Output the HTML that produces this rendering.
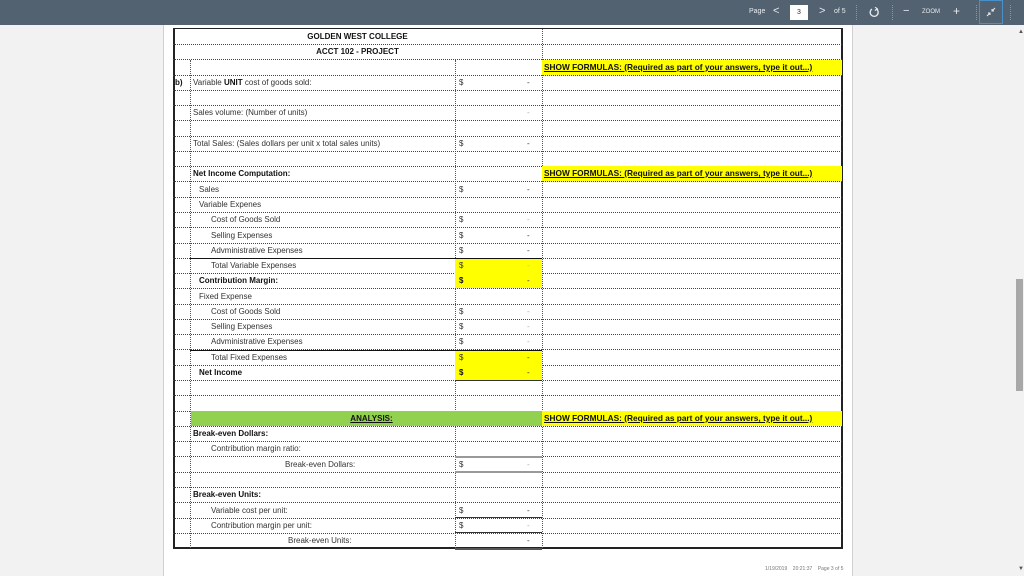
<!DOCTYPE html>
<html><head><meta charset="utf-8">
<style>
*{margin:0;padding:0;box-sizing:border-box}
body{width:1024px;height:576px;overflow:hidden;background:#f2f2f2;font-family:"Liberation Sans",sans-serif;position:relative}
#bar{position:absolute;left:0;top:0;width:1024px;height:25px;background:#536271;color:#e8ecef;font-size:7px}
#bar span{position:absolute;top:8px}
.sep{position:absolute;top:5px;height:15px;border-left:1px dotted #8a97a3}
#page{position:absolute;left:163px;top:25px;width:690px;height:551px;background:#fff;border-left:1px solid #d0d0d0;border-right:1px solid #d0d0d0}
.row{position:absolute;left:173px;width:669px;height:16px;border-bottom:1px dotted #444;font-size:8px;color:#333;line-height:15px}
.row div{position:absolute;top:0;height:15px;white-space:nowrap}
.v{position:absolute;border-left:1px dotted #555}
.y{background:#ffff00}
.b{font-weight:bold;color:#111}
.c{position:absolute;top:0;left:0;width:369px;text-align:center}
.sf{font-size:8.3px}
.hl{position:absolute;left:190px;width:352px;border-top:1px solid #111}
</style></head><body>
<div id="bar">
<span style="left:749px">Page</span>
<span style="left:773px;top:5px;font-size:11px">&lt;</span>
<div style="position:absolute;left:790px;top:5px;width:18px;height:15px;background:#fff;color:#333;font-size:7px;text-align:center;line-height:15px">3</div>
<span style="left:819px;top:5px;font-size:11px">&gt;</span>
<span style="left:834px">of 5</span>
<div class="sep" style="left:856px"></div>
<svg style="position:absolute;left:869px;top:7px" width="11" height="11" viewBox="0 0 11 11"><path d="M3 2 A4 4 0 1 0 7 1.8" fill="none" stroke="#e8ecef" stroke-width="1.3"/><path d="M6 0 L8.5 2 L5.8 3.5" fill="none" stroke="#e8ecef" stroke-width="1.1"/></svg>
<div class="sep" style="left:892px"></div>
<span style="left:903px;top:5px;font-size:11px">−</span>
<span style="left:922px;font-size:6px;top:9px">ZOOM</span>
<span style="left:953px;top:4px;font-size:12px">+</span>
<div class="sep" style="left:976px"></div>
<div style="position:absolute;left:979px;top:0;width:24px;height:24px;border:1px solid #4a90c8"></div>
<svg style="position:absolute;left:986px;top:7px" width="10" height="10" viewBox="0 0 10 10"><path d="M1 9 L4 6 M2 6 H4 V8 M9 1 L6 4 M6 2 V4 H8" fill="none" stroke="#e8ecef" stroke-width="1"/></svg>
<div class="sep" style="left:1010px"></div>
</div>
<div id="page"></div>
<div style="position:absolute;left:1016px;top:279px;width:7px;height:112px;background:#a8a8a8"></div>
<div style="position:absolute;left:1018px;top:29px;font-size:6px;color:#555">▲</div>
<div style="position:absolute;left:1018px;top:566px;font-size:6px;color:#555">▼</div>

<div style="position:absolute;left:173px;top:28px;width:670px;height:521px;border:2px solid #222;border-top:1px solid #222"></div>
<div class="v" style="left:190px;top:60px;height:488px"></div>
<div class="v" style="left:455px;top:60px;height:488px"></div>
<div class="v" style="left:542px;top:29px;height:519px"></div>

<div class="row" style="top:29px"><div class="c b">GOLDEN WEST COLLEGE</div></div>
<div class="row" style="top:44px"><div class="c b">ACCT 102 - PROJECT</div></div>
<div class="row" style="top:60px"><div class="y b sf" style="left:369px;width:300px;text-decoration:underline;padding-left:2px">SHOW FORMULAS: (Required as part of your answers, type it out...)</div></div>
<div class="row" style="top:75px"><div class="b" style="left:2px">b)</div><div style="left:20px">Variable <b style="color:#111">UNIT</b> cost of goods sold:</div><div style="left:286px">$</div><div style="left:354px">-</div></div>
<div class="row" style="top:90px"></div>
<div class="row" style="top:105px"><div style="left:20px">Sales volume: (Number of units)</div><div style="left:354px;color:#aaa">-</div></div>
<div class="row" style="top:121px"></div>
<div class="row" style="top:136px"><div style="left:20px">Total Sales: (Sales dollars per unit x total sales units)</div><div style="left:286px">$</div><div style="left:354px">-</div></div>
<div class="row" style="top:151px"></div>
<div class="row" style="top:166px"><div class="b" style="left:20px">Net Income Computation:</div><div class="y b sf" style="left:369px;width:300px;text-decoration:underline;padding-left:2px">SHOW FORMULAS: (Required as part of your answers, type it out...)</div></div>
<div class="row" style="top:182px"><div style="left:26px">Sales</div><div style="left:286px">$</div><div style="left:354px">-</div></div>
<div class="row" style="top:197px"><div style="left:26px">Variable Expenes</div></div>
<div class="row" style="top:212px"><div style="left:38px">Cost of Goods Sold</div><div style="left:286px">$</div><div style="left:354px;color:#aaa">-</div></div>
<div class="row" style="top:228px"><div style="left:38px">Selling Expenses</div><div style="left:286px">$</div><div style="left:354px">-</div></div>
<div class="row" style="top:243px"><div style="left:38px">Advministrative Expenses</div><div style="left:286px">$</div><div style="left:354px">-</div></div>
<div class="row" style="top:258px"><div class="y" style="left:282px;width:87px"></div><div style="left:38px">Total Variable Expenses</div><div style="left:286px">$</div><div style="left:354px;color:#bbb">-</div></div>
<div class="hl" style="top:258px"></div>
<div class="row" style="top:273px"><div class="y" style="left:282px;width:87px"></div><div class="b" style="left:26px">Contribution Margin:</div><div class="b" style="left:286px">$</div><div style="left:354px">-</div></div>
<div class="row" style="top:289px"><div style="left:26px">Fixed Expense</div></div>
<div class="row" style="top:304px"><div style="left:38px">Cost of Goods Sold</div><div style="left:286px">$</div><div style="left:354px;color:#aaa">-</div></div>
<div class="row" style="top:319px"><div style="left:38px">Selling Expenses</div><div style="left:286px">$</div><div style="left:354px;color:#aaa">-</div></div>
<div class="row" style="top:334px"><div style="left:38px">Advministrative Expenses</div><div style="left:286px">$</div><div style="left:354px;color:#aaa">-</div></div>
<div class="row" style="top:350px"><div class="y" style="left:282px;width:87px"></div><div style="left:38px">Total Fixed Expenses</div><div style="left:286px">$</div><div style="left:354px">-</div></div>
<div class="hl" style="top:350px"></div>
<div class="row" style="top:365px"><div class="y" style="left:282px;width:87px"></div><div class="b" style="left:26px">Net Income</div><div class="b" style="left:286px">$</div><div style="left:354px">-</div></div>
<div style="position:absolute;left:455px;top:380px;width:87px;border-top:1px solid #333"></div>
<div class="row" style="top:380px"></div>
<div class="row" style="top:396px"></div>
<div class="row" style="top:411px"><div style="left:18px;width:351px;background:#92d050"></div><div class="c b" style="left:18px;width:351px;text-decoration:underline;padding-left:10px">ANALYSIS:</div><div class="y b sf" style="left:369px;width:300px;text-decoration:underline;padding-left:2px">SHOW FORMULAS: (Required as part of your answers, type it out...)</div></div>
<div class="row" style="top:426px"><div class="b" style="left:20px">Break-even Dollars:</div></div>
<div class="row" style="top:441px"><div style="left:38px">Contribution margin ratio:</div></div>
<div style="position:absolute;left:455px;top:456px;width:87px;border-top:2px solid #999"></div>
<div class="row" style="top:457px"><div style="left:112px">Break-even Dollars:</div><div style="left:286px">$</div><div style="left:354px;color:#aaa">-</div></div>
<div style="position:absolute;left:455px;top:471px;width:87px;border-top:2px solid #999"></div>
<div class="row" style="top:472px"></div>
<div class="row" style="top:487px"><div class="b" style="left:20px">Break-even Units:</div></div>
<div class="row" style="top:503px"><div style="left:38px">Variable cost per unit:</div><div style="left:286px">$</div><div style="left:354px">-</div></div>
<div style="position:absolute;left:455px;top:517px;width:87px;border-top:1px solid #333"></div>
<div class="row" style="top:518px"><div style="left:38px">Contribution margin per unit:</div><div style="left:286px">$</div><div style="left:354px;color:#aaa">-</div></div>
<div style="position:absolute;left:455px;top:532px;width:87px;border-top:1px solid #333"></div>
<div class="row" style="top:533px;border-bottom:none"><div style="left:115px">Break-even Units:</div><div style="left:354px">-</div></div>
<div style="position:absolute;left:455px;top:548px;width:87px;border-top:2px solid #555"></div>

<div style="position:absolute;left:765px;top:566px;font-size:5px;color:#777;white-space:nowrap">1/19/2019 &nbsp;&nbsp; 20:21:37 &nbsp;&nbsp; Page 3 of 5</div>
</body></html>
